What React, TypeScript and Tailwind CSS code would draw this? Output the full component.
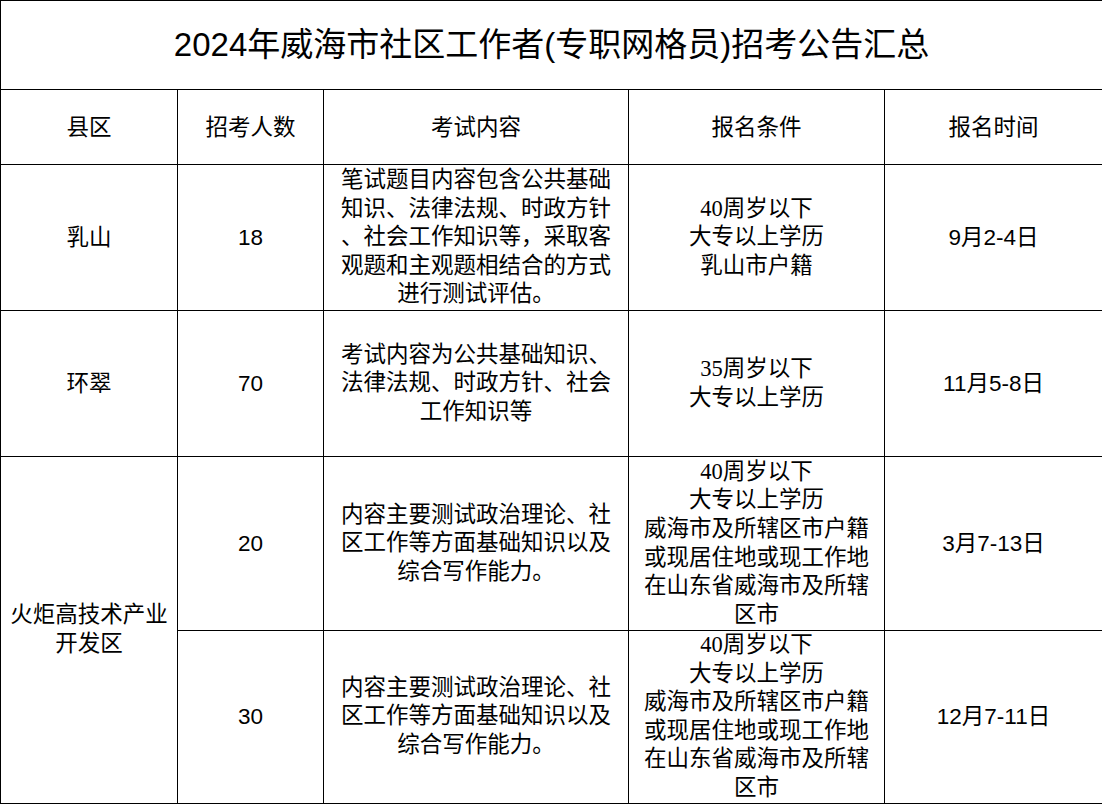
import React from 'react'

// ── Data ──────────────────────────────────────────────────────

interface Row {
  count: string
  content: string[]
  conditions: string[]
  time: string
}

const sans = "font-['Liberation_Sans','Noto_Sans_CJK_SC',sans-serif]"
const serif = "font-['Liberation_Serif','Noto_Sans_CJK_SC',serif]"

const longCond = ['40周岁以下', '大专以上学历', '威海市及所辖区市户籍', '或现居住地或现工作地', '在山东省威海市及所辖', '区市']
const hjContent = ['内容主要测试政治理论、社', '区工作等方面基础知识以及', '综合写作能力。']

// fixed-height lines so mixed fonts don't grow the rows
function Lines({ lines }: { lines: string[] }) {
  return (
    <>
      {lines.map((l, i) => (
        <div key={i} className="whitespace-nowrap h-[28.6px] leading-[28.6px]">{l}</div>
      ))}
    </>
  )
}

const cell = 'border border-black text-center align-middle p-0 text-[22.5px] leading-[29px] text-black'

export default function App() {
  const hj: Row[] = [
    { count: '20', content: hjContent, conditions: longCond, time: '3月7-13日' },
    { count: '30', content: hjContent, conditions: longCond, time: '12月7-11日' },
  ]

  return (
    <div className={`w-[1102px] h-[805px] bg-white overflow-hidden ${sans}`}>
      <table className="w-[1102px] border-collapse border border-black table-fixed">
        <colgroup>
          <col className="w-[177px]" />
          <col className="w-[146px]" />
          <col className="w-[305px]" />
          <col className="w-[256px]" />
          <col className="w-[218px]" />
        </colgroup>
        <tbody>
          <tr className="h-[89px]">
            <td colSpan={5} className="border border-black text-center align-middle p-0 text-[33px] leading-[40px] text-black">
              2024年威海市社区工作者(专职网格员)招考公告汇总
            </td>
          </tr>
          <tr className="h-[75px]">
            <td className={cell}>县区</td>
            <td className={cell}>招考人数</td>
            <td className={cell}>考试内容</td>
            <td className={cell}>报名条件</td>
            <td className={cell}>报名时间</td>
          </tr>

          {/* 乳山 */}
          <tr className="h-[146px]">
            <td className={cell}>乳山</td>
            <td className={cell}>18</td>
            <td className={cell}>
              <Lines lines={['笔试题目内容包含公共基础', '知识、法律法规、时政方针', '、社会工作知识等，采取客', '观题和主观题相结合的方式', '进行测试评估。']} />
            </td>
            <td className={`${cell} ${serif}`}>
              <Lines lines={['40周岁以下', '大专以上学历', '乳山市户籍']} />
            </td>
            <td className={cell}>9月2-4日</td>
          </tr>

          {/* 环翠 */}
          <tr className="h-[146px]">
            <td className={cell}>环翠</td>
            <td className={cell}>70</td>
            <td className={cell}>
              <Lines lines={['考试内容为公共基础知识、', '法律法规、时政方针、社会', '工作知识等']} />
            </td>
            <td className={`${cell} ${serif}`}>
              <Lines lines={['35周岁以下', '大专以上学历']} />
            </td>
            <td className={cell}>11月5-8日</td>
          </tr>

          {/* 火炬高技术产业开发区 */}
          {hj.map((r, i) => (
            <tr key={i} className={i === 0 ? 'h-[174px]' : 'h-[172px]'}>
              {i === 0 && (
                <td rowSpan={2} className={cell}>
                  <Lines lines={['火炬高技术产业', '开发区']} />
                </td>
              )}
              <td className={cell}>{r.count}</td>
              <td className={cell}>
                <Lines lines={r.content} />
              </td>
              <td className={`${cell} ${serif}`}>
                <Lines lines={r.conditions} />
              </td>
              <td className={cell}>{r.time}</td>
            </tr>
          ))}
        </tbody>
      </table>
    </div>
  )
}
